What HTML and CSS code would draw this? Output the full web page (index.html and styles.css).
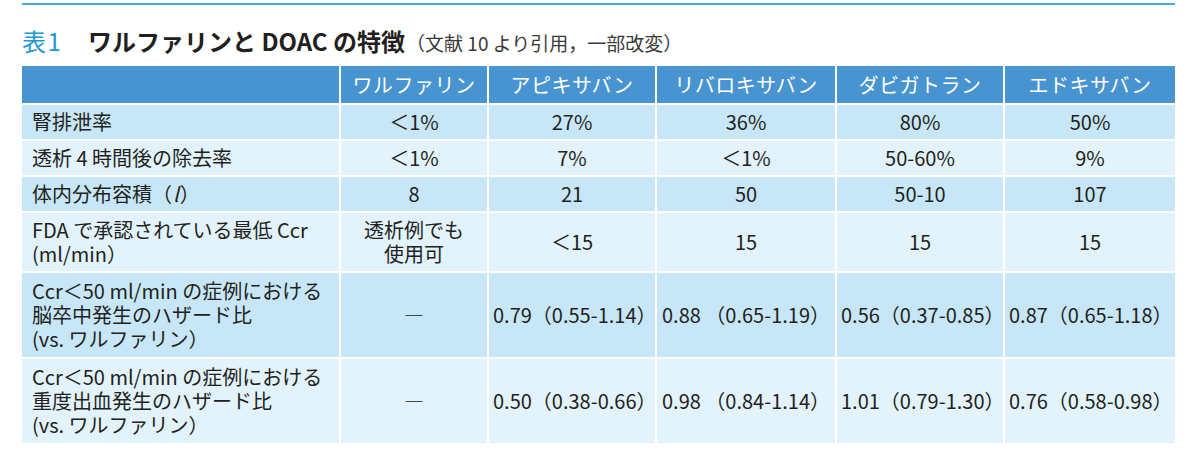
FILE: index.html
```html
<!DOCTYPE html>
<html lang="ja">
<head>
<meta charset="utf-8">
<title>表1 ワルファリンと DOAC の特徴</title>
<link rel="stylesheet" href="styles.css">
</head>
<body>
<div class="page">
  <div class="rule"></div>
  <h1 class="title"><span class="num">表 1</span><span class="main">ワルファリンと DOAC の特徴</span><span class="src">（文献 10 より引用，一部改変）</span></h1>
  <table class="tbl">
    <colgroup>
      <col class="c0"><col class="c1"><col class="c2"><col class="c3"><col class="c4"><col class="c5">
    </colgroup>
    <thead>
      <tr><th></th><th>ワルファリン</th><th>アピキサバン</th><th>リバロキサバン</th><th>ダビガトラン</th><th>エドキサバン</th></tr>
    </thead>
    <tbody>
      <tr class="odd"><td class="lab">腎排泄率</td><td>＜1%</td><td>27%</td><td>36%</td><td>80%</td><td>50%</td></tr>
      <tr class="even"><td class="lab">透析 4 時間後の除去率</td><td>＜1%</td><td>7%</td><td>＜1%</td><td>50-60%</td><td>9%</td></tr>
      <tr class="odd"><td class="lab">体内分布容積（<i>l</i>）</td><td>8</td><td>21</td><td>50</td><td>50-10</td><td>107</td></tr>
      <tr class="even"><td class="lab">FDA で承認されている最低 Ccr<br>(ml/min）</td><td>透析例でも<br>使用可</td><td>＜15</td><td>15</td><td>15</td><td>15</td></tr>
      <tr class="odd tall"><td class="lab">Ccr＜50 ml/min の症例における<br>脳卒中発生のハザード比<br>(vs. ワルファリン）</td><td>―</td><td>0.79（0.55-1.14）</td><td>0.88 （0.65-1.19）</td><td>0.56（0.37-0.85）</td><td>0.87（0.65-1.18）</td></tr>
      <tr class="even tall"><td class="lab">Ccr＜50 ml/min の症例における<br>重度出血発生のハザード比<br>(vs. ワルファリン）</td><td>―</td><td>0.50（0.38-0.66）</td><td>0.98 （0.84-1.14）</td><td>1.01（0.79-1.30）</td><td>0.76（0.58-0.98）</td></tr>
    </tbody>
  </table>
</div>
</body>
</html>
```
FILE: styles.css
```css
html, body {
  margin: 0;
  padding: 0;
  background: #ffffff;
}
body {
  font-family: "Noto Sans CJK JP", "Noto Sans", sans-serif;
  color: #231f20;
}
.page {
  padding: 3px 0 0 22px;
  width: 1153px;
}
.rule {
  height: 2px;
  background: #45ade0;
}
.title {
  margin: 20px 0 0 0;
  height: 32px;
  line-height: 32px;
  font-size: 24px;
  font-weight: 400;
  display: flex;
  align-items: baseline;
  white-space: nowrap;
}
.title .num {
  color: #2196d3;
  width: 66px;
  font-size: 24px;
  letter-spacing: -2px;
}
.title .main {
  font-weight: 700;
  color: #231f20;
}
.title .src {
  font-size: 19px;
  color: #3a3a3a;
  margin-left: 1px;
}
.tbl {
  margin: 7px 0 0 -2px;
  border-collapse: separate;
  border-spacing: 2px;
  table-layout: fixed;
  width: 1157px;
  font-size: 20px;
  line-height: 24px;
}
.c0 { width: 317px; }
.c1 { width: 146px; }
.c2 { width: 166px; }
.c3 { width: 178px; }
.c4 { width: 166px; }
.c5 { width: 170px; }
.tbl th {
  background: #4894d0;
  color: #ffffff;
  font-weight: 400;
  height: 37px;
  padding: 0;
  text-align: center;
  letter-spacing: 0.5px;
}
.tbl td {
  padding: 5px 4px;
  text-align: center;
  vertical-align: middle;
  white-space: nowrap;
}
.tbl td.lab {
  text-align: left;
  padding-left: 10px;
}
.tbl tr.odd td {
  background: #c7e7f8;
}
.tbl tr.even td {
  background: #e2f3fc;
}
.tbl tr.tall td {
  padding-top: 6px;
  padding-bottom: 6px;
}
.tbl i {
  font-style: italic;
  padding: 0 1px;
}
```
